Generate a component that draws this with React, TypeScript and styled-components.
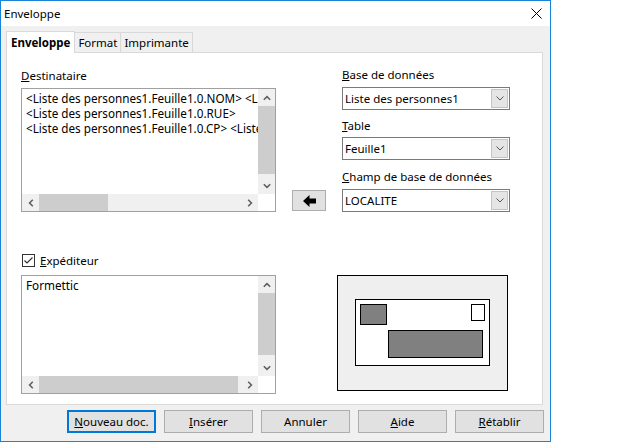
import styled, { createGlobalStyle } from 'styled-components'

const GlobalStyle = createGlobalStyle`
  html, body {
    margin: 0;
    padding: 0;
    background: #fff;
  }
  body {
    font-family: "Segoe UI", "Noto Sans", "Liberation Sans", sans-serif;
    font-size: 11px;
    color: #000;
  }
`

const Window = styled.div`
  width: 551px;
  height: 442px;
  box-sizing: border-box;
  border: 1px solid #1883d7;
  background: #f0f0f0;
  display: flex;
  flex-direction: column;
`

const TitleBar = styled.div`
  height: 25px;
  background: #fff;
  display: flex;
  align-items: center;
  justify-content: space-between;
  padding: 0 8px 0 3px;
  font-size: 11.5px;
`

const CloseIcon = () => (
  <svg width="11" height="11" viewBox="0 0 11 11">
    <path d="M0.5 0.5 L10.5 10.5 M10.5 0.5 L0.5 10.5" stroke="#000" strokeWidth="1" />
  </svg>
)

const Tabs = styled.div`
  display: flex;
  align-items: flex-end;
  height: 26px;
  padding-left: 5px;
`

const Tab = styled.div<{ $active?: boolean }>`
  box-sizing: border-box;
  height: ${({ $active }) => ($active ? '22px' : '20px')};
  padding: 0 ${({ $active }) => ($active ? '4px' : '3px')};
  display: flex;
  align-items: center;
  border: 1px solid #d9d9d9;
  border-bottom: none;
  background: ${({ $active }) => ($active ? '#fff' : '#f0f0f0')};
  font-size: 11.5px;
  font-weight: ${({ $active }) => ($active ? 700 : 400)};
  margin-bottom: ${({ $active }) => ($active ? '-1px' : '0')};
  position: relative;
  z-index: ${({ $active }) => ($active ? 1 : 0)};
  & + & {
    margin-left: -1px;
  }
`

const Panel = styled.div`
  margin: 0 7px 0 5px;
  height: 353px;
  box-sizing: border-box;
  background: #fff;
  border: 1px solid #d9d9d9;
  padding: 14px 0 0 14px;
  display: flex;
  flex-direction: column;
`

const TopRow = styled.div`
  display: flex;
  align-items: flex-end;
`

const Column = styled.div<{ $width: number }>`
  width: ${({ $width }) => $width}px;
  display: flex;
  flex-direction: column;
`

const Label = styled.div<{ $gap?: number }>`
  height: 16px;
  line-height: 16px;
  font-size: 11.5px;
  margin-bottom: ${({ $gap }) => $gap ?? 4}px;
  white-space: nowrap;
  u {
    text-decoration: underline;
  }
`

const ListBox = styled.div<{ $height: number }>`
  position: relative;
  box-sizing: border-box;
  height: ${({ $height }) => $height}px;
  border: 1px solid #a0a0a0;
  background: #fff;
  display: grid;
  grid-template-columns: minmax(0, 1fr) 17px;
  grid-template-rows: minmax(0, 1fr) 17px;
  overflow: hidden;
`

const ListText = styled.div`
  padding: 2px 0 0 4px;
  font-size: 11.7px;
  line-height: 15px;
  white-space: nowrap;
  overflow: hidden;
`

const VScroll = styled.div`
  background: #f0f0f0;
  display: flex;
  flex-direction: column;
  align-items: center;
`

const HScroll = styled.div`
  background: #f0f0f0;
  display: flex;
  align-items: center;
`

const Corner = styled.div`
  background: #fff;
`

const Thumb = styled.div<{ $len: number; $vertical?: boolean }>`
  background: #cdcdcd;
  ${({ $vertical, $len }) =>
    $vertical ? `width: 100%; height: ${$len}px;` : `height: 100%; width: ${$len}px;`}
`

const ArrowCell = styled.div<{ $vertical?: boolean }>`
  flex: 0 0 17px;
  width: ${({ $vertical }) => ($vertical ? '100%' : '17px')};
  height: ${({ $vertical }) => ($vertical ? '17px' : '100%')};
  display: flex;
  align-items: center;
  justify-content: center;
`

const Spacer = styled.div`
  flex: 1;
`

const Chevron = ({ dir }: { dir: 'up' | 'down' | 'left' | 'right' }) => {
  const rot = { up: 0, right: 90, down: 180, left: 270 }[dir]
  return (
    <svg width="8" height="8" viewBox="0 0 8 8" style={{ transform: `rotate(${rot}deg)` }}>
      <path d="M0.8 5.8 L4 2.6 L7.2 5.8" fill="none" stroke="#606060" strokeWidth="1.6" />
    </svg>
  )
}

const ScrollList = ({ lines, height, vThumb, hThumb }: { lines: string[]; height: number; vThumb: [number, number]; hThumb: [number, number] }) => (
  <ListBox $height={height}>
    <ListText>
      {lines.map((l, i) => (
        <div key={i}>{l}</div>
      ))}
    </ListText>
    <VScroll>
      <ArrowCell $vertical>
        <Chevron dir="up" />
      </ArrowCell>
      <div style={{ height: vThumb[0] }} />
      <Thumb $vertical $len={vThumb[1]} />
      <Spacer />
      <ArrowCell $vertical>
        <Chevron dir="down" />
      </ArrowCell>
    </VScroll>
    <HScroll>
      <ArrowCell>
        <Chevron dir="left" />
      </ArrowCell>
      <div style={{ width: hThumb[0] }} />
      <Thumb $len={hThumb[1]} />
      <Spacer />
      <ArrowCell>
        <Chevron dir="right" />
      </ArrowCell>
    </HScroll>
    <Corner />
  </ListBox>
)

const Select = styled.div<{ $gap?: number }>`
  box-sizing: border-box;
  height: 23px;
  border: 1px solid #7a7a7a;
  background: #fff;
  display: flex;
  align-items: center;
  padding: 1px 1px 1px 2px;
  margin-bottom: ${({ $gap }) => $gap ?? 0}px;
  font-size: 11.5px;
`

const SelectValue = styled.div`
  flex: 1;
  white-space: nowrap;
`

const DropButton = styled.div`
  box-sizing: border-box;
  width: 17px;
  height: 19px;
  background: #e5e5e5;
  border: 1px solid #c4c4c4;
  display: flex;
  align-items: center;
  justify-content: center;
`

const DropChevron = () => (
  <svg width="8" height="5" viewBox="0 0 8 5">
    <path d="M0.5 0.5 L4 4 L7.5 0.5" fill="none" stroke="#555" strokeWidth="1" />
  </svg>
)

const ArrowButton = styled.div`
  box-sizing: border-box;
  width: 34px;
  height: 21px;
  margin: 0 16px 1px 16px;
  background: #e1e1e1;
  border: 1px solid #adadad;
  display: flex;
  align-items: center;
  justify-content: center;
`

const LeftArrowIcon = () => (
  <svg width="13" height="12" viewBox="0 0 13 12">
    <path d="M0 6 L6.5 0 L6.5 3.5 L13 3.5 L13 8.5 L6.5 8.5 L6.5 12 Z" fill="#000" />
  </svg>
)

const CheckRow = styled.div`
  display: flex;
  align-items: center;
  height: 16px;
  margin: 40px 0 7px 1px;
  gap: 5px;
  font-size: 11.5px;
`

const CheckBox = styled.div`
  box-sizing: border-box;
  width: 13px;
  height: 13px;
  border: 1px solid #333;
  background: #fff;
  display: flex;
  align-items: center;
  justify-content: center;
`

const CheckIcon = () => (
  <svg width="11" height="11" viewBox="0 0 11 11">
    <path d="M1.5 5.5 L4 8 L9.5 2.5" fill="none" stroke="#333" strokeWidth="1.2" />
  </svg>
)

const BottomRow = styled.div`
  display: flex;
  align-items: flex-start;
`

const Preview = styled.div`
  box-sizing: border-box;
  margin-left: 61px;
  width: 171px;
  height: 116px;
  background: #efefef;
  border: 1px solid #000;
  display: flex;
  align-items: center;
  justify-content: center;
  padding-bottom: 2px;
`

const EnvelopeCard = styled.div`
  box-sizing: border-box;
  width: 135px;
  height: 67px;
  background: #fff;
  border: 1px solid #000;
  padding: 4px 4px 6px 4px;
  display: grid;
  grid-template-columns: 27px 1fr 14px;
  grid-template-rows: 17px 1fr;
  row-gap: 6px;
`

const Block = styled.div<{ $fill: string }>`
  box-sizing: border-box;
  background: ${({ $fill }) => $fill};
  border: 1px solid #000;
`

const SenderBlock = styled(Block)`
  height: 21px;
`

const StampBlock = styled(Block)`
  grid-column: 3;
  height: 17px;
`

const AddressBlock = styled(Block)`
  grid-column: 2 / 4;
  grid-row: 2;
  margin: 3px 2px 1px 1px;
`

const ButtonBar = styled.div`
  flex: 1;
  display: flex;
  align-items: center;
  justify-content: flex-end;
  gap: 8px;
  padding: 0 6px 3px 0;
`

const Button = styled.div<{ $focused?: boolean }>`
  box-sizing: border-box;
  width: 89px;
  height: 23px;
  background: #e1e1e1;
  border: ${({ $focused }) => ($focused ? '2px solid #0078d7' : '1px solid #adadad')};
  display: flex;
  align-items: center;
  justify-content: center;
  white-space: nowrap;
  font-size: 11.5px;
  u {
    text-decoration: underline;
  }
`

const App = () => {
  return (
    <>
      <GlobalStyle />
      <Window>
        <TitleBar>
          <span>Enveloppe</span>
          <CloseIcon />
        </TitleBar>
        <Tabs>
          <Tab $active>Enveloppe</Tab>
          <Tab>Format</Tab>
          <Tab>Imprimante</Tab>
        </Tabs>
        <Panel>
          <TopRow>
            <Column $width={255}>
              <Label>
                <u>D</u>estinataire
              </Label>
              <ScrollList
                height={124}
                lines={[
                  '<Liste des personnes1.Feuille1.0.NOM> <Lis',
                  '<Liste des personnes1.Feuille1.0.RUE>',
                  '<Liste des personnes1.Feuille1.0.CP> <Liste',
                ]}
                vThumb={[0, 68]}
                hThumb={[0, 69]}
              />
            </Column>
            <ArrowButton>
              <LeftArrowIcon />
            </ArrowButton>
            <Column $width={168}>
              <Label>
                <u>B</u>ase de données
              </Label>
              <Select $gap={8}>
                <SelectValue>Liste des personnes1</SelectValue>
                <DropButton>
                  <DropChevron />
                </DropButton>
              </Select>
              <Label $gap={3}>
                <u>T</u>able
              </Label>
              <Select $gap={9}>
                <SelectValue>Feuille1</SelectValue>
                <DropButton>
                  <DropChevron />
                </DropButton>
              </Select>
              <Label>
                <u>C</u>hamp de base de données
              </Label>
              <Select>
                <SelectValue>LOCALITE</SelectValue>
                <DropButton>
                  <DropChevron />
                </DropButton>
              </Select>
            </Column>
          </TopRow>
          <CheckRow>
            <CheckBox>
              <CheckIcon />
            </CheckBox>
            <span>
              <u>E</u>xpéditeur
            </span>
          </CheckRow>
          <BottomRow>
            <Column $width={255}>
              <ScrollList height={119} lines={['Formettic']} vThumb={[0, 62]} hThumb={[0, 199]} />
            </Column>
            <Preview>
              <EnvelopeCard>
                <SenderBlock $fill="#808080" />
                <StampBlock $fill="#fff" />
                <AddressBlock $fill="#808080" />
              </EnvelopeCard>
            </Preview>
          </BottomRow>
        </Panel>
        <ButtonBar>
          <Button $focused>
            <span>
              <u>N</u>ouveau doc.
            </span>
          </Button>
          <Button>
            <span>
              <u>I</u>nsérer
            </span>
          </Button>
          <Button>Annuler</Button>
          <Button>
            <span>
              <u>A</u>ide
            </span>
          </Button>
          <Button>
            <span>
              <u>R</u>établir
            </span>
          </Button>
        </ButtonBar>
      </Window>
    </>
  )
}

export default App
